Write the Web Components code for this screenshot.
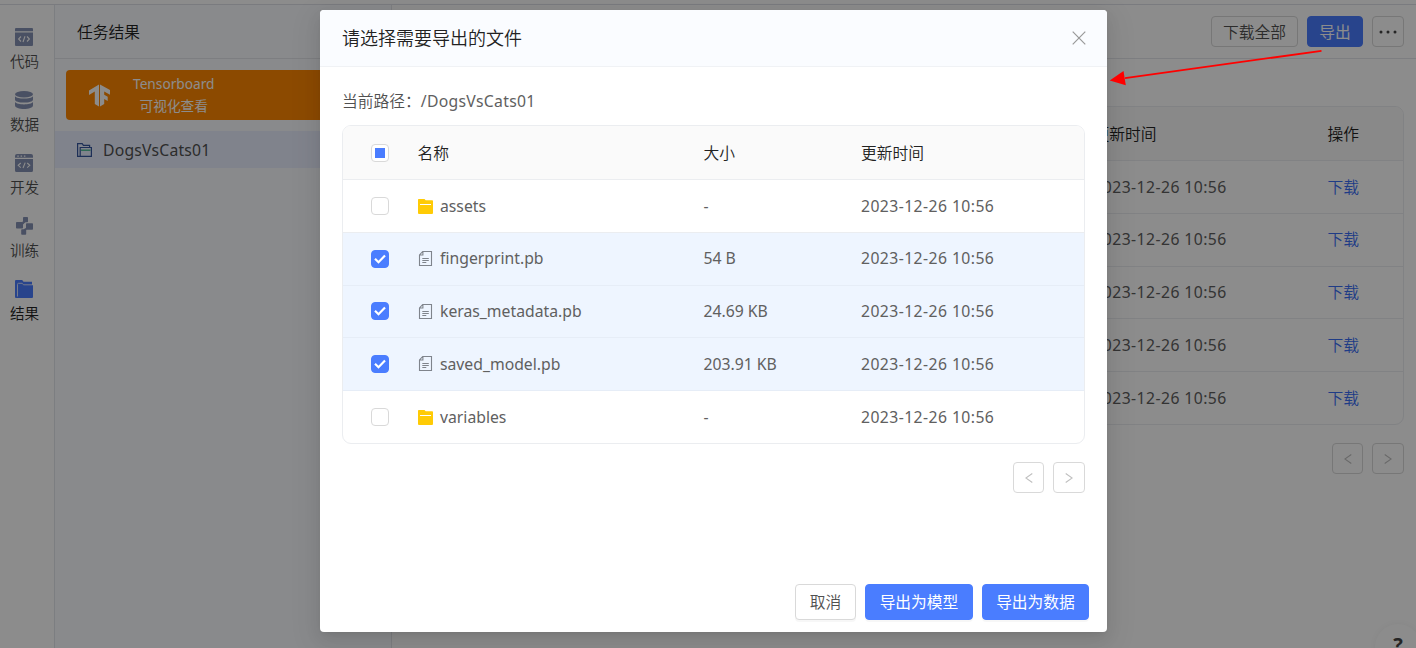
<!DOCTYPE html>
<html lang="zh">
<head>
<meta charset="utf-8">
<title>任务结果</title>
<style>
    html, body{
        margin: 0;
        height: 648px;
        overflow: hidden;
    }

    body{
        font-family: "Noto Sans", "Noto Sans CJK SC", sans-serif;
        font-size: 15.75px;
        font-weight: 350;
        line-height: 24px;
        color: #505050;
        background-color: #fff;
    }
</style>
</head>
<body>
<result-page></result-page>
<script>
function define(name, html, setup){
    const template = document.createElement('template');
    template.innerHTML = html;

    window.customElements.define(name, class extends HTMLElement {
        constructor() {
            super();
            this.attachShadow({mode: 'open'});
            this.shadowRoot.appendChild(template.content.cloneNode(true));
        }

        connectedCallback() {
            if(setup) setup(this, this.shadowRoot);
        }
    });
}

const icons = {
    code: `<svg width="18" height="18" viewBox="0 0 18 18"><path fill="#8692b4" d="M1 0h16a1 1 0 0 1 1 1v2.3H0V1a1 1 0 0 1 1-1zM0 4.5h18V17a1 1 0 0 1-1 1H1a1 1 0 0 1-1-1z"/><path fill="none" stroke="#fff" stroke-width="1.1" d="M6 8.5 3.6 11 6 13.5M12 8.5l2.4 2.5-2.4 2.5M10 8.2 8 14"/></svg>`,
    data: `<svg width="18" height="18" viewBox="0 0 18 18"><g fill="#8692b4"><ellipse cx="9" cy="3.2" rx="9" ry="3.2"/><path d="M0 5.2c2 3.2 16 3.2 18 0v3.2c0 4.2-18 4.2-18 0z"/><path d="M0 11c2 3.2 16 3.2 18 0v3.2c0 5-18 5-18 0z"/></g></svg>`,
    dev: `<svg width="18" height="18" viewBox="0 0 18 18"><path fill="#8692b4" d="M2 0h14a2 2 0 0 1 2 2v1.7H0V2a2 2 0 0 1 2-2zM0 5h18v11.5A1.5 1.5 0 0 1 16.5 18h-15A1.5 1.5 0 0 1 0 16.5z"/><path fill="#fff" d="M2.3 1.5h1.5v1.2H2.3zM5.6 1.5h1.5v1.2H5.6zM8.9 1.5h1.5v1.2H8.9z"/><path fill="none" stroke="#fff" stroke-width="1.1" d="M5.8 9 3.2 11.3l2.6 2.3M12.2 9l2.6 2.3-2.6 2.3M10.2 8.6 8 14"/></svg>`,
    train: `<svg width="18" height="18" viewBox="0 0 18 18"><g fill="#8692b4"><rect x="1" y="5" width="7" height="6.5" rx=".8"/><rect x="8" y="0" width="5" height="5.2" rx=".8"/><rect x="11" y="6.2" width="7" height="6.5" rx=".8"/><rect x="6.2" y="12.3" width="5" height="5.4" rx=".8"/><path d="M7 5l2-1 1.5 1L8 7.5zM10.5 11l1.5 1.5-2 1-1.5-1z"/></g></svg>`,
    result: `<svg width="18" height="18" viewBox="0 0 18 18"><path fill="#4a7dff" d="M1 0h6.2l1.3 1.7H17v3.6h1V17a1 1 0 0 1-1 1H1a1 1 0 0 1-1-1V1a1 1 0 0 1 1-1z"/><path fill="none" stroke="#d6e0ff" stroke-width="1" d="M2.5 16.5V4.3a1 1 0 0 1 1-1h3.7l1.3 1.5H17"/></svg>`,
    open: `<svg width="15" height="14" viewBox="0 0 15 14"><path fill="none" stroke="#35579e" stroke-width="1.2" d="M2.8 13.4H.6V.6h4.6l1.2 1.7h6.2v2.2M3.2 13.4V4.5h11.2v8.9z"/><path stroke="#3fba8b" stroke-width="1.3" d="M4 7.2h9.5"/></svg>`,
    folder: `<svg width="15" height="16" viewBox="0 -1 15 16"><path fill="#ffcb05" d="M.8 0h5.7l1.2 1.3h6.5a.8.8 0 0 1 .8.8V14a1 1 0 0 1-1 1H1a1 1 0 0 1-1-1V.8A.8.8 0 0 1 .8 0z"/><path stroke="#fff" stroke-width="1.2" d="M2 5.5h11"/></svg>`,
    file: `<svg width="15" height="17" viewBox="0 0 15 17"><path fill="none" stroke="#7f848c" stroke-width="1.1" d="M4.7 1.5h8.8v14h-12V5zM4.9 1.5V5H1.5M4.3 8.5h6.5M4.3 10.5h6.5M4.3 12.5h4"/></svg>`,
    flow: `<svg width="21" height="23" viewBox="0 0 21 23"><path fill="#fff" d="M10 .5v22l-4.2-2.5V7.5L0 11V6.5zM11 .5 21 6v4.8L15.2 7.5v3.3l3.5 2v4.3l-3.5-2V20L11 22.5z"/></svg>`,
    dots: `<svg width="18" height="4" viewBox="0 0 18 4"><g fill="#444"><circle cx="2" cy="2" r="1.5"/><circle cx="9" cy="2" r="1.5"/><circle cx="16" cy="2" r="1.5"/></g></svg>`,
    left: `<svg width="8" height="10" viewBox="0 0 8 10"><path fill="none" stroke="#bfbfbf" stroke-width="1.1" d="M7.3.5.8 5l6.5 4.5"/></svg>`,
    right: `<svg width="8" height="10" viewBox="0 0 8 10"><path fill="none" stroke="#bfbfbf" stroke-width="1.1" d="M.7.5 7.2 5 .7 9.5"/></svg>`,
    close: `<svg width="14" height="14" viewBox="0 0 14 14"><path stroke="#999" stroke-width="1.2" d="M.7.7l12.6 12.6M13.3.7.7 13.3"/></svg>`
};

define('ui-icon', `
    <style>
        :host{ display: flex; flex: none; }
    </style>
`, (host, root) => {
    root.innerHTML += icons[host.getAttribute('name')];
});

define('ui-button', `
    <style>
        :host{
            display: flex;
            align-items: center;
            justify-content: center;
            box-sizing: border-box;
            height: 31px;
            border: solid 1px #d9d9d9;
            border-radius: 4px;
            background-color: #fff;
            color: #505050;
            white-space: nowrap;
        }

        :host([type="primary"]){
            background-color: #4a7dff;
            border-color: #4a7dff;
            color: #fff;
            font-weight: 400;
        }

        :host([size="large"]){
            height: 36px;
            box-shadow: 0 2px 0 rgba(0,0,0,0.03);
        }
    </style>
    <slot></slot>
`);

define('ui-pager', `
    <style>
        :host{
            display: flex;
            justify-content: flex-end;
            gap: 9px;
            margin-top: 18px;
        }

        .prev{ width: 31px; }
        .next{ width: 32px; }
    </style>
    <ui-button class="prev"><ui-icon name="left"></ui-icon></ui-button>
    <ui-button class="next"><ui-icon name="right"></ui-icon></ui-button>
`);

define('check-box', `
    <style>
        :host{
            display: flex;
            align-items: center;
            justify-content: center;
            box-sizing: border-box;
            width: 18px;
            height: 18px;
            border: solid 1px #d9d9d9;
            border-radius: 4px;
            background-color: #fff;
        }

        :host([state="on"]){
            background-color: #4a7dff;
            border-color: #4a7dff;
        }

        svg, i{ display: none; }
        :host([state="on"]) svg{ display: block; }

        :host([state="some"]) i{
            display: block;
            width: 10px;
            height: 10px;
            background-color: #4a7dff;
        }
    </style>
    <i></i>
    <svg width="12" height="10" viewBox="0 0 12 10"><path fill="none" stroke="#fff" stroke-width="2.2" d="M1 4.8l3.5 3.4L11 1.6"/></svg>
`);

define('rail-item', `
    <style>
        :host{
            display: flex;
            flex-direction: column;
            align-items: center;
            gap: 3px;
            width: 48px;
            height: 63px;
            font-size: 14.6px;
            line-height: 24px;
        }

        :host([active]){ color: #222; }
        ui-icon{ height: 18px; }
        div{ margin-left: 1px; }
    </style>
    <ui-icon></ui-icon>
    <div><slot></slot></div>
`, (host, root) => {
    const icon = document.createElement('ui-icon');
    icon.setAttribute('name', host.getAttribute('icon'));
    root.querySelector('ui-icon').replaceWith(icon);
});

define('side-rail', `
    <style>
        :host{
            display: block;
            box-sizing: border-box;
            width: 55px;
            padding-top: 23px;
            border-right: solid 1px #e2e5ec;
        }
    </style>
    <rail-item icon="code">代码</rail-item>
    <rail-item icon="data">数据</rail-item>
    <rail-item icon="dev">开发</rail-item>
    <rail-item icon="train">训练</rail-item>
    <rail-item icon="result" active>结果</rail-item>
`);

define('task-panel', `
    <style>
        :host{
            display: block;
            box-sizing: border-box;
            width: 337px;
            border-right: solid 1px #e4e6ec;
            background-color: #fafcff;
        }

        header{
            box-sizing: border-box;
            height: 54px;
            padding: 15px 22px;
            border-bottom: solid 1px #e4e6ec;
            color: #222;
        }

        .board{
            display: flex;
            align-items: center;
            height: 50px;
            margin: 11px;
            border-radius: 4px;
            background-color: #ff8800;
            color: #fff;
            font-size: 13.7px;
            font-weight: 400;
            line-height: 22px;
            text-align: center;
        }

        .board ui-icon{ margin: 0 23px 0 23px; }

        .item{
            display: flex;
            align-items: center;
            gap: 11px;
            height: 37px;
            padding-left: 22px;
            background-color: #e9efff;
            font-weight: 400;
            letter-spacing: 0.2px;
        }
    </style>
    <header>任务结果</header>
    <div class="board">
        <ui-icon name="flow"></ui-icon>
        <div>Tensorboard<br>可视化查看</div>
    </div>
    <div class="item"><ui-icon name="open"></ui-icon><span>DogsVsCats01</span></div>
`);

define('table-row', `
    <style>
        :host{
            display: grid;
            grid-template-columns: var(--columns);
            align-items: center;
            box-sizing: border-box;
            height: 52.75px;
            border-bottom: solid 1px #ebedf0;
        }

        :host([head]){
            height: 54px;
            background-color: #fafafa;
            color: #222;
        }

        :host([selected]){
            background-color: #eef5ff;
            border-color: #e6edf7;
        }

        :host([last]){
            height: 52px;
            border-bottom: none;
        }

        :host(:not([head])) ::slotted(a){ margin-bottom: 0.6px; }

        :host(:not([head])) ::slotted(span){
            margin-bottom: 0.6px;
            font-weight: 400;
            color: #606060;
        }
    </style>
    <slot></slot>
`);

define('data-table', `
    <style>
        :host{
            display: block;
            box-sizing: border-box;
            border: solid 1px #ebedf0;
            border-radius: 9px;
            overflow: hidden;
        }
    </style>
    <slot></slot>
`);

define('result-files', `
    <style>
        :host{ display: block; flex: 1; }

        header{
            display: flex;
            gap: 9px;
            justify-content: flex-end;
            box-sizing: border-box;
            height: 54px;
            padding: 11px 12px 0 0;
            border-bottom: solid 1px #e4e6ec;
        }

        .all{ width: 87px; }
        .export{ width: 56px; }
        .more{ width: 32px; }

        main{ padding: 47px 12px 0 22px; }
        data-table{ --columns: 678.4px 234px 1fr; }
        a{ color: #3a6df5; }
        .date{ letter-spacing: 0.42px; }
    </style>
    <header>
        <ui-button class="all">下载全部</ui-button>
        <ui-button class="export" type="primary">导出</ui-button>
        <ui-button class="more"><ui-icon name="dots"></ui-icon></ui-button>
    </header>
    <main>
        <data-table>
            <table-row head><span></span><span>更新时间</span><span>操作</span></table-row>
            <table-row><span></span><span class="date">2023-12-26 10:56</span><a>下载</a></table-row>
            <table-row><span></span><span class="date">2023-12-26 10:56</span><a>下载</a></table-row>
            <table-row><span></span><span class="date">2023-12-26 10:56</span><a>下载</a></table-row>
            <table-row><span></span><span class="date">2023-12-26 10:56</span><a>下载</a></table-row>
            <table-row last><span></span><span class="date">2023-12-26 10:56</span><a>下载</a></table-row>
        </data-table>
        <ui-pager></ui-pager>
    </main>
`);

define('export-dialog', `
    <style>
        :host{
            display: flex;
            flex-direction: column;
            box-sizing: border-box;
            width: 787px;
            height: 622px;
            border-radius: 4px;
            overflow: hidden;
            background-color: #fff;
            box-shadow: 0 3px 6px -4px rgba(0,0,0,0.12), 0 6px 16px rgba(0,0,0,0.08), 0 9px 28px 8px rgba(0,0,0,0.05);
        }

        header{
            display: flex;
            align-items: center;
            justify-content: space-between;
            box-sizing: border-box;
            height: 57px;
            padding: 0 21px 0 22px;
            border-bottom: solid 1px #f0f2f5;
            background-color: #fafcff;
            color: #222;
            font-size: 18px;
        }

        main{
            flex: 1;
            padding: 22px 22px 0;
        }

        .path{ margin-bottom: 12px; }

        .path span{
            color: #606060;
            font-weight: 400;
            letter-spacing: 0.3px;
        }

        data-table{ --columns: 74.6px 285.8px 157.6px 1fr; }
        check-box{ margin-left: 28px; }

        .name{
            display: flex;
            align-items: center;
            gap: 7.4px;
        }

        .date{ letter-spacing: 0.42px; }

        footer{
            display: flex;
            gap: 9px;
            justify-content: flex-end;
            padding: 0 18px 12px;
        }

        .cancel{ width: 61px; }
        .model{ width: 108px; }
        .data{ width: 107px; }
    </style>
    <header>请选择需要导出的文件<ui-icon name="close"></ui-icon></header>
    <main>
        <div class="path">当前路径：<span>/DogsVsCats01</span></div>
        <data-table>
            <table-row head><check-box state="some"></check-box><span>名称</span><span>大小</span><span>更新时间</span></table-row>
            <table-row><check-box></check-box><span class="name"><ui-icon name="folder"></ui-icon><span>assets</span></span><span>-</span><span class="date">2023-12-26 10:56</span></table-row>
            <table-row selected><check-box state="on"></check-box><span class="name"><ui-icon name="file"></ui-icon><span>fingerprint.pb</span></span><span>54 B</span><span class="date">2023-12-26 10:56</span></table-row>
            <table-row selected><check-box state="on"></check-box><span class="name"><ui-icon name="file"></ui-icon><span>keras_metadata.pb</span></span><span>24.69 KB</span><span class="date">2023-12-26 10:56</span></table-row>
            <table-row selected><check-box state="on"></check-box><span class="name"><ui-icon name="file"></ui-icon><span>saved_model.pb</span></span><span>203.91 KB</span><span class="date">2023-12-26 10:56</span></table-row>
            <table-row last><check-box></check-box><span class="name"><ui-icon name="folder"></ui-icon><span>variables</span></span><span>-</span><span class="date">2023-12-26 10:56</span></table-row>
        </data-table>
        <ui-pager></ui-pager>
    </main>
    <footer>
        <ui-button class="cancel" size="large">取消</ui-button>
        <ui-button class="model" type="primary" size="large">导出为模型</ui-button>
        <ui-button class="data" type="primary" size="large">导出为数据</ui-button>
    </footer>
`);

define('result-page', `
    <style>
        :host{
            display: block;
            position: relative;
            width: 1416px;
            height: 648px;
            overflow: hidden;
        }

        .page{
            display: flex;
            box-sizing: border-box;
            height: 644px;
            margin-top: 4px;
            border-top: solid 1px #dfe1e8;
        }

        .help{
            position: absolute;
            left: 1375px;
            top: 624px;
            width: 46px;
            height: 46px;
            border-radius: 50%;
            background-color: #fff;
            box-shadow: 0 0 6px rgba(0,0,0,0.05);
            color: #444;
            font-size: 20px;
            font-weight: bold;
            line-height: 42px;
            text-align: center;
        }

        .mask{
            position: absolute;
            inset: 0;
            display: flex;
            justify-content: center;
            align-items: flex-start;
            box-sizing: border-box;
            padding: 10px 0 0 11px;
            background-color: rgba(0,0,0,0.45);
        }

        .arrow{
            position: absolute;
            left: 1100px;
            top: 40px;
        }
    </style>
    <div class="page">
        <side-rail></side-rail>
        <task-panel></task-panel>
        <result-files></result-files>
    </div>
    <div class="help">?</div>
    <div class="mask"><export-dialog></export-dialog></div>
    <svg class="arrow" width="230" height="50" viewBox="0 0 230 50"><path stroke="#f00" stroke-width="1.8" d="M221.5 10.8 25 38.2"/><path fill="#f00" d="M9.7 40.4 23.5 31l2.3 14.3z"/></svg>
`);
</script>
</body>
</html>
